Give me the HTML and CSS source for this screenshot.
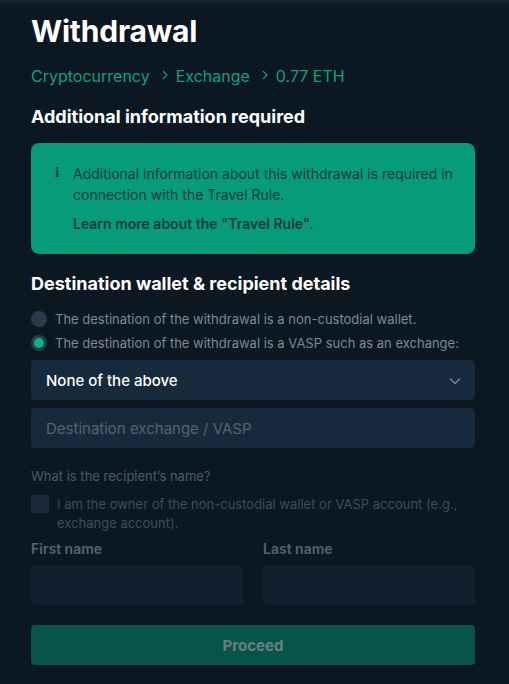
FILE: index.html
```html
<!DOCTYPE html>
<html>
<head>
<meta charset="utf-8">
<link rel="stylesheet" href="styles.css">
</head>
<body>
<div class="topbar"></div>
<main class="page">
  <h1 class="title">Withdrawal</h1>
  <nav class="crumbs">
    <span>Cryptocurrency</span>
    <svg class="sep" width="6" height="10" viewBox="0 0 6 10"><path d="M1 1 L5 5 L1 9" fill="none" stroke="#0ea17c" stroke-width="1.1"/></svg>
    <span>Exchange</span>
    <svg class="sep" width="6" height="10" viewBox="0 0 6 10"><path d="M1 1 L5 5 L1 9" fill="none" stroke="#0ea17c" stroke-width="1.1"/></svg>
    <span>0.77 ETH</span>
  </nav>
  <h2 class="section">Additional information required</h2>
  <div class="notice">
    <div class="notice-icon">i</div>
    <div class="notice-body">
      <p class="notice-text">Additional information about this withdrawal is required in connection with the Travel Rule.</p>
      <p class="notice-link">Learn more about the "Travel Rule".</p>
    </div>
  </div>
  <h2 class="section section-2">Destination wallet &amp; recipient details</h2>
  <div class="radios">
    <label class="radio-row"><span class="radio"></span><span>The destination of the withdrawal is a non-custodial wallet.</span></label>
    <label class="radio-row"><span class="radio checked"></span><span>The destination of the withdrawal is a VASP such as an exchange:</span></label>
  </div>
  <div class="select">
    <span>None of the above</span>
    <svg class="chev" width="12" height="8" viewBox="0 0 12 8"><path d="M1 1.5 L6 6.5 L11 1.5" fill="none" stroke="#7b8a99" stroke-width="1.4"/></svg>
  </div>
  <div class="input placeholder">Destination exchange / VASP</div>
  <div class="dim">
    <p class="question">What is the recipient’s name?</p>
    <label class="check-row"><span class="checkbox"></span><span>I am the owner of the non-custodial wallet or VASP account (e.g., exchange account).</span></label>
    <div class="names">
      <div class="field">
        <div class="field-label">First name</div>
        <div class="field-input"></div>
      </div>
      <div class="field">
        <div class="field-label">Last name</div>
        <div class="field-input"></div>
      </div>
    </div>
    <button class="proceed">Proceed</button>
  </div>
</main>
</body>
</html>
```
FILE: styles.css
```css
* { box-sizing: border-box; }
html, body { margin: 0; padding: 0; }
body {
  background: #0c1821;
  font-family: Inter, "Noto Sans", sans-serif;
  color: #ffffff;
  width: 509px;
  height: 684px;
  overflow: hidden;
}
.topbar { height: 3px; background: #15222e; }
.page { padding: 0 34px 0 31px; }
.title {
  margin: 10px 0 0;
  font-size: 30px;
  font-weight: 700;
  line-height: 36px;
  letter-spacing: -0.2px;
}
.crumbs {
  margin-top: 17px;
  display: flex;
  align-items: center;
  gap: 9px;
  font-size: 16px;
  line-height: 20px;
  color: #0ea17c;
}
.crumbs .sep { margin: -3px -1px 0 3px; }
.section {
  margin: 19px 0 0;
  font-size: 18px;
  font-weight: 700;
  line-height: 24px;
}
.notice {
  margin-top: 14px;
  background: #069b7b;
  border-radius: 8px;
  padding: 20px 22px 20px 22px;
  display: flex;
  gap: 14px;
  color: #163a3a;
  font-size: 14px;
  line-height: 21px;
}
.notice-icon {
  font-family: "DejaVu Serif", serif;
  font-weight: 700;
  font-size: 12px;
  line-height: 21px;
  width: 6px;
  padding-left: 2px;
}
.notice-body p { margin: 0; }
.notice-link { margin-top: 8px !important; font-weight: 600; }
.section-2 { margin-top: 18px; }
.radios { margin-top: 14px; display: flex; flex-direction: column; gap: 6px; }
.radio-row {
  display: flex; align-items: center; gap: 8px;
  font-size: 13px; line-height: 18px; color: #7d8994;
}
.radio {
  width: 16px; height: 16px; border-radius: 50%;
  background: #2a3b4b; flex: none; position: relative;
}
.radio.checked::after {
  content: ""; position: absolute; left: 3px; top: 3px;
  width: 10px; height: 10px; border-radius: 50%; background: #0ab283;
}
.select {
  margin-top: 8px;
  height: 40px;
  background: #172a3c;
  border-radius: 4px;
  display: flex; align-items: center; justify-content: space-between;
  padding: 0 14px 0 15px;
  font-size: 15px; font-weight: 500;
}
.chev { margin-top: 1px; }
.input {
  margin-top: 8px;
  height: 40px;
  background: #172a3c;
  border-radius: 4px;
  display: flex; align-items: center;
  padding: 0 15px;
  font-size: 15px;
}
.placeholder { color: #56636f; }
.question {
  margin: 19px 0 0;
  font-size: 13px; line-height: 18px; color: #4d5a66;
}
.check-row {
  margin-top: 10px;
  display: flex; gap: 8px;
  font-size: 13px; line-height: 19px; color: #3f4d59;
}
.checkbox {
  width: 18px; height: 18px; border-radius: 3px;
  background: #1a2a38; flex: none; margin-top: 0px;
}
.names {
  margin-top: 7px;
  display: grid; grid-template-columns: 1fr 1fr; gap: 20px;
}
.field-label {
  font-size: 14px; font-weight: 600; line-height: 18px; color: #56636e;
}
.field-input {
  margin-top: 7px; height: 40px; background: #101f2d; border-radius: 4px;
}
.proceed {
  margin-top: 20px;
  width: 100%; height: 40px;
  border: none; border-radius: 4px;
  background: #07544a;
  color: #6b7f7e;
  font-family: Inter, sans-serif;
  font-size: 15px; font-weight: 700;
}
```
